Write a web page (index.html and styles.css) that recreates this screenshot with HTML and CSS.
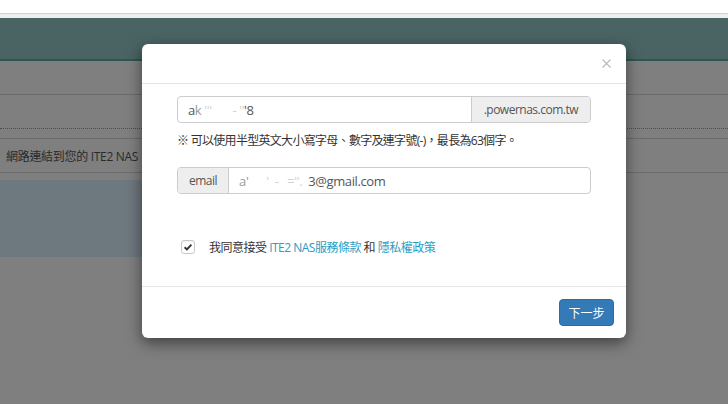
FILE: index.html
```html
<!DOCTYPE html>
<html lang="zh-Hant">
<head>
    <meta charset="UTF-8">
    <meta name="viewport" content="width=device-width, initial-scale=1.0">
    <link rel="stylesheet" href="styles.css">
    <title>ITE2 NAS</title>
</head>
<body>
    <div class="chrome"></div>
    <div class="chrome-strip"></div>

    <div class="app">
        <header class="topnav"></header>
        <div class="row row-title"></div>
        <div class="row row-dotted"></div>
        <div class="row row-text">
            <p>網路連結到您的 ITE2 NAS。</p>
        </div>
        <div class="info-box"></div>

        <!-- Fondo oscuro del modal -->
        <div class="backdrop"></div>

        <div class="modal">
            <div class="modal-header">
                <button class="close" type="button">
                    <svg width="9" height="9" viewBox="0 0 9 9"><path d="M0.5 0.5 L8.5 8.5 M8.5 0.5 L0.5 8.5" stroke="#b9b9b9" stroke-width="1.1" fill="none"/></svg>
                </button>
            </div>

            <div class="modal-body">
                <div class="input-group">
                    <div class="form-control">a<span class="faint">k</span><span class="smudge">&nbsp;'''&nbsp;&nbsp;&nbsp;&nbsp;&nbsp;&nbsp;&nbsp;-&nbsp;''</span>'8</div>
                    <span class="addon addon-right">.powernas.com.tw</span>
                </div>
                <p class="help">※ 可以使用半型英文大小寫字母、數字及連字號(-)，最長為63個字。</p>

                <div class="input-group">
                    <span class="addon addon-left">email</span>
                    <div class="form-control"><span class="faint">a'</span><span class="smudge">&nbsp;&nbsp;&nbsp;&nbsp;&nbsp;&nbsp;'&nbsp;&nbsp;-&nbsp;&nbsp;&nbsp;=''.&nbsp;&nbsp;</span>3@gmail.com</div>
                </div>

                <label class="agree">
                    <span class="check">
                        <svg width="14" height="14" viewBox="0 0 14 14"><path d="M3.6 7.2 L5.9 9.4 L10.4 4.6" stroke="#333" stroke-width="1.9" fill="none"/></svg>
                    </span>
                    <span class="agree-text">我同意接受 <a href="#">ITE2 NAS服務條款</a> 和 <a href="#">隱私權政策</a></span>
                </label>
            </div>

            <div class="modal-footer">
                <button class="btn-primary" type="button">下一步</button>
            </div>
        </div>
    </div>
</body>
</html>
```

FILE: styles.css
```css
body {
    margin: 0;
    padding: 0;
    font-family: 'Open Sans', 'Noto Sans CJK TC', sans-serif;
    font-size: 12px;
    letter-spacing: -0.3px;
    color: #333;
    background-color: #fff;
    overflow: hidden;
}

.chrome {
    height: 13px;
    background-color: #fff;
    border-bottom: 1px solid #d2d2d2;
}

.chrome-strip {
    height: 4px;
    background-color: #eef0f0;
}

.app {
    position: relative;
    height: 386px;
    overflow: hidden;
    background-color: #fff;
}

/* Contenido de la página (debajo del fondo oscuro) */
.topnav {
    height: 41px;
    background-color: #94c6c6;
    border-bottom: 2px solid #5aaaa2;
}

.row {
    height: 33px;
}

.row-title {
    border-bottom: 1px solid #d6d6d6;
}

.row-dotted {
    border-bottom: 1px dotted #9a9a9a;
    margin-bottom: 9px;
}

.row-text {
    border-top: 1px solid #d6d6d6;
    border-bottom: 1px solid #d6d6d6;
    display: flex;
    align-items: center;
}

.row-text p {
    margin: 0 0 0 6px;
    font-size: 12px;
    color: #555;
    white-space: nowrap;
}

.info-box {
    margin-top: 7px;
    height: 77px;
    width: 560px;
    background-color: #dcf0ff;
}

.backdrop {
    position: absolute;
    top: 0;
    left: 0;
    right: 0;
    bottom: 0;
    background-color: #000;
    opacity: 0.5;
}

/* Modal */
.modal {
    position: absolute;
    top: 26px;
    left: 142px;
    width: 484px;
    background-color: #fff;
    border-radius: 6px;
    box-shadow: 0 5px 15px rgba(0, 0, 0, 0.5);
}

.modal-header {
    height: 39px;
    border-bottom: 1px solid #e5e5e5;
    display: flex;
    align-items: center;
    justify-content: flex-end;
    padding: 0 15px;
}

.close {
    background: none;
    border: none;
    padding: 0;
    display: flex;
    cursor: pointer;
}

.modal-body {
    padding: 12px 35px 29px;
}

.input-group {
    display: flex;
    height: 27px;
    border: 1px solid #ccc;
    border-radius: 4px;
    box-sizing: border-box;
    overflow: hidden;
}

.form-control {
    flex: 1;
    display: flex;
    align-items: center;
    padding: 0 10px;
    font-size: 13px;
    letter-spacing: -0.4px;
    color: #555;
    white-space: pre;
}

.faint {
    color: #9a9a9a;
}

.smudge {
    color: #d2d2d2;
}

.addon {
    display: flex;
    align-items: center;
    padding: 0 12px;
    background-color: #eee;
    color: #555;
    font-size: 12px;
    letter-spacing: -0.5px;
}

.addon-right {
    border-left: 1px solid #ccc;
}

.addon-left {
    border-right: 1px solid #ccc;
    padding: 0 11px;
}

.help {
    margin: 10px 0 18px;
    line-height: 16px;
    letter-spacing: -0.7px;
    color: #333;
}

.agree {
    margin-top: 43px;
    height: 20px;
    display: flex;
    align-items: center;
    padding-left: 4px;
    color: #333;
}

.check {
    width: 14px;
    height: 14px;
    box-sizing: border-box;
    border: 1px solid #c8c8c8;
    border-radius: 3px;
    margin-right: 14px;
    display: flex;
    box-shadow: inset 0 1px 1px rgba(0, 0, 0, 0.05);
}

.check svg {
    margin: -1px;
}

.agree-text {
    white-space: nowrap;
    letter-spacing: -0.5px;
}

.agree a {
    color: #2d9cc2;
    text-decoration: none;
}

.modal-footer {
    border-top: 1px solid #e5e5e5;
    padding: 12px;
    display: flex;
    justify-content: flex-end;
}

.btn-primary {
    width: 55px;
    height: 27px;
    background-color: #337ab7;
    border: 1px solid #2e6da4;
    border-radius: 4px;
    color: #fff;
    font-family: 'Open Sans', 'Noto Sans CJK TC', sans-serif;
    font-size: 12px;
    letter-spacing: 0;
    padding: 0;
    cursor: pointer;
}
```
